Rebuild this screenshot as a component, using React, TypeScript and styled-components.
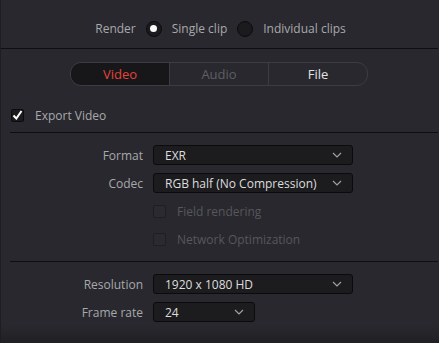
import React from "react";
import styled, { createGlobalStyle } from "styled-components";

const GlobalStyle = createGlobalStyle`
  html, body {
    margin: 0;
    padding: 0;
    background: #28282e;
  }
  body {
    font-family: "Open Sans", "Noto Sans", sans-serif;
    font-size: 12px;
    -webkit-font-smoothing: antialiased;
  }
`;

const Panel = styled.div`
  width: 439px;
  height: 343px;
  box-sizing: border-box;
  background: linear-gradient(#28282e 0, #28282e 326px, #202024 343px);
  border-left: 1px solid #1e1e22;
  display: flex;
  flex-direction: column;
  overflow: hidden;
`;

const RenderRow = styled.div`
  height: 48px;
  padding-top: 9px;
  box-sizing: border-box;
  display: flex;
  align-items: center;
  justify-content: center;
  gap: 10px;
  color: #a8a8ac;
  padding-left: 1px;
`;

const RadioOption = styled.label`
  display: flex;
  align-items: center;
  gap: 10px;
`;

const RadioDot = styled.span<{ $on?: boolean }>`
  width: 14px;
  height: 14px;
  border-radius: 50%;
  background: #1b1b1e;
  border: 1px solid #0c0c0e;
  display: flex;
  align-items: center;
  justify-content: center;
  &::after {
    content: "";
    width: 7px;
    height: 7px;
    border-radius: 50%;
    background: ${(p) => (p.$on ? "#fafafa" : "transparent")};
  }
`;

const Divider = styled.div<{ $inset?: boolean }>`
  height: 1px;
  flex: none;
  background: #0f0f11;
  margin-left: ${(p) => (p.$inset ? "9px" : "0")};
  margin-right: 1px;
`;

const TabsWrap = styled.div`
  display: flex;
  padding: 13px 0 0 69px;
  height: 47px;
  box-sizing: border-box;
`;

const Tabs = styled.div`
  display: flex;
  height: 22px;
  border: 1px solid #3c3c42;
  border-radius: 11px;
  overflow: hidden;
`;

const Tab = styled.div<{ $tone: "active" | "dim" | "normal" }>`
  width: 98px;
  display: flex;
  align-items: center;
  justify-content: center;
  font-size: 13px;
  background: ${(p) => (p.$tone === "active" ? "#17171a" : "transparent")};
  color: ${(p) =>
    p.$tone === "active" ? "#e5433a" : p.$tone === "dim" ? "#5f5f64" : "#e2e2e4"};
  & + & {
    border-left: 1px solid #3c3c42;
  }
`;

const CheckRow = styled.div<{ $indent?: number; $disabled?: boolean }>`
  display: flex;
  align-items: center;
  height: 13px;
  gap: 11px;
  padding-left: ${(p) => p.$indent ?? 0}px;
  color: ${(p) => (p.$disabled ? "#57575c" : "#a8a8ac")};
`;

const Box = styled.span<{ $disabled?: boolean }>`
  width: 13px;
  height: 13px;
  border-radius: 2px;
  box-sizing: border-box;
  border: 1px solid ${(p) => (p.$disabled ? "#1f1f23" : "#0c0c0e")};
  background: ${(p) => (p.$disabled ? "#2a2a30" : "#1b1b1e")};
  display: flex;
  align-items: center;
  justify-content: center;
`;

const ExportSection = styled.div`
  height: 36px;
  padding: 2px 0 0 10px;
  display: flex;
  align-items: center;
  box-sizing: border-box;
`;

const Section = styled.div<{ $top: number; $bottom: number }>`
  display: flex;
  flex-direction: column;
  gap: 8px;
  padding: ${(p) => p.$top}px 0 ${(p) => p.$bottom}px;
`;

const Options = styled.div`
  display: flex;
  flex-direction: column;
  gap: 15px;
  margin-top: 4px;
`;

const FieldRow = styled.div`
  display: grid;
  grid-template-columns: 142px auto;
  column-gap: 10px;
  align-items: center;
  height: 20px;
`;

const Label = styled.span`
  text-align: right;
  color: #a8a8ac;
`;

const Select = styled.div<{ $w: number }>`
  width: ${(p) => p.$w}px;
  height: 20px;
  box-sizing: border-box;
  background: #1c1c1f;
  border: 1px solid #0b0b0d;
  border-radius: 3px;
  display: flex;
  align-items: center;
  justify-content: space-between;
  padding: 0 10px 0 11px;
  color: #dcdcde;
`;

const Chevron = () => (
  <svg width="10" height="6" viewBox="0 0 10 6">
    <path d="M1 1l4 4 4-4" fill="none" stroke="#a0a0a4" strokeWidth="1.2" />
  </svg>
);

const Check = () => (
  <svg width="11" height="10" viewBox="0 0 11 10">
    <path d="M1.5 5.5l2.8 3L9.5 1" fill="none" stroke="#fff" strokeWidth="2" />
  </svg>
);

const Dropdown = ({ value, w }: { value: string; w: number }) => (
  <Select $w={w}>
    <span>{value}</span>
    <Chevron />
  </Select>
);

export default function App() {
  return (
    <>
      <GlobalStyle />
      <Panel>
        <RenderRow>
          <span>Render</span>
          <RadioOption>
            <RadioDot $on />
            <span>Single clip</span>
          </RadioOption>
          <RadioOption>
            <RadioDot />
            <span>Individual clips</span>
          </RadioOption>
        </RenderRow>
        <Divider />
        <TabsWrap>
          <Tabs>
            <Tab $tone="active">Video</Tab>
            <Tab $tone="dim">Audio</Tab>
            <Tab $tone="normal">File</Tab>
          </Tabs>
        </TabsWrap>
        <ExportSection>
          <CheckRow>
            <Box>
              <Check />
            </Box>
            <span>Export Video</span>
          </CheckRow>
        </ExportSection>
        <Divider $inset />
        <Section $top={12} $bottom={15}>
          <FieldRow>
            <Label>Format</Label>
            <Dropdown value="EXR" w={200} />
          </FieldRow>
          <FieldRow>
            <Label>Codec</Label>
            <Dropdown value="RGB half (No Compression)" w={200} />
          </FieldRow>
          <Options>
            <CheckRow $indent={152} $disabled>
              <Box $disabled />
              <span>Field rendering</span>
            </CheckRow>
            <CheckRow $indent={152} $disabled>
              <Box $disabled />
              <span>Network Optimization</span>
            </CheckRow>
          </Options>
        </Section>
        <Divider $inset />
        <Section $top={12} $bottom={0}>
          <FieldRow>
            <Label>Resolution</Label>
            <Dropdown value="1920 x 1080 HD" w={200} />
          </FieldRow>
          <FieldRow>
            <Label>Frame rate</Label>
            <Dropdown value="24" w={102} />
          </FieldRow>
        </Section>
      </Panel>
    </>
  );
}
